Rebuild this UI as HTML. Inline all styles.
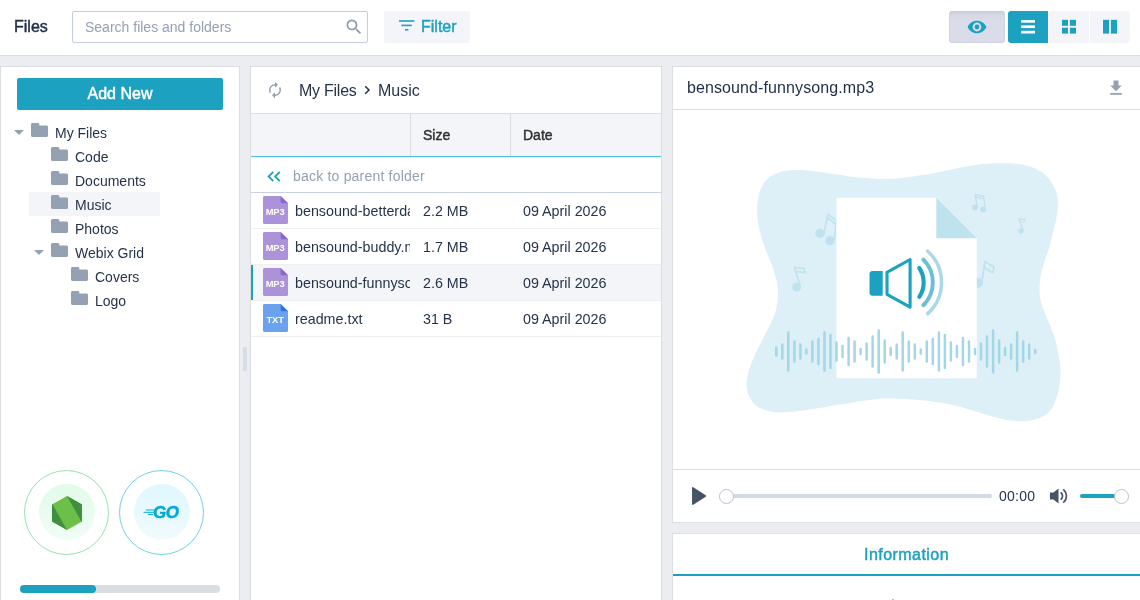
<!DOCTYPE html>
<html><head><meta charset="utf-8"><title>Files</title>
<style>
*{box-sizing:border-box;margin:0;padding:0}
html,body{width:1140px;height:600px;overflow:hidden;background:#EBEDF0;font-family:"Liberation Sans",sans-serif;color:#25344B;}
.abs{position:absolute}
#wrap{position:absolute;left:0;top:0;width:1140px;height:600px;overflow:hidden;will-change:transform}
#top{position:absolute;left:0;top:0;width:1140px;height:56px;background:#fff;border-bottom:1px solid #DADEE0}
.med{-webkit-text-stroke:0.45px currentColor}
#title{position:absolute;left:14px;top:17px;font-size:16px;line-height:20px;color:#1F2E47}
#search{position:absolute;left:72px;top:11px;width:296px;height:32px;border:1px solid #C3CDE0;border-radius:2px;background:#fff}
#search span{position:absolute;left:12px;top:6px;font-size:14px;line-height:18px;color:#94A1B3}
#filter{position:absolute;left:384px;top:11px;width:86px;height:32px;border-radius:2px;background:#F4F5F9;color:#1CA1C1}
#filter span{position:absolute;left:37px;top:6px;font-size:16px;line-height:20px}
.tb{position:absolute;top:11px;height:32px;background:#F4F5F9}
.panel{position:absolute;background:#fff;border:1px solid #DADEE0}
#left{left:0;top:66px;width:240px;height:540px}
#mid{left:250px;top:66px;width:412px;height:540px}
#right{left:672px;top:66px;width:480px;height:457px}
#info{left:672px;top:533px;width:480px;height:80px}
#addnew{position:absolute;left:16px;top:11px;width:206px;height:32px;background:#1CA1C1;border-radius:2px;color:#fff;text-align:center;font-size:16px;line-height:32px}
.trow{position:absolute;left:0;height:24px;font-size:14px;line-height:24px;color:#25344B;white-space:nowrap}
.fold{position:absolute;top:3px;width:17px;height:14px}
.car{position:absolute;top:10px;width:0;height:0;border-left:5px solid transparent;border-right:5px solid transparent;border-top:5px solid #94A1B3}

.tt{font-size:14px}
.p16{font-size:16px;line-height:20px;color:#25344B;white-space:nowrap}
.hd{font-size:14px;line-height:20px;color:#313131}
.frow{width:410px;height:36px;border-bottom:1px solid #EDEFF0}
.fn{font-size:14.3px;line-height:37px;height:35px;color:#25344B;white-space:nowrap;overflow:hidden}
</style></head><body>
<div id="wrap">
<div id="top">
  <div id="title" class="med">Files</div>
  <div id="search"><span>Search files and folders</span>
    <svg class="abs" style="left:271.300px;top:4.500px" width="20" height="20" viewBox="0 0 24 24"><path fill="#8C99AD" d="M9.5,3A6.5,6.5 0 0,1 16,9.500C16,11.110 15.410,12.590 14.440,13.730L14.710,14H15.500L20.500,19L19,20.500L14,15.500V14.710L13.730,14.440C12.590,15.410 11.110,16 9.500,16A6.500,6.500 0 0,1 3,9.500A6.500,6.500 0 0,1 9.500,3M9.500,5C7,5 5,7 5,9.500C5,12 7,14 9.500,14C12,14 14,12 14,9.500C14,7 12,5 9.500,5Z"/></svg>
  </div>
  <div id="filter"><svg class="abs" style="left:15px;top:9px" width="16" height="12" viewBox="0 0 16 12"><rect x="0" y="0.2" width="15.4" height="1.6" fill="#1CA1C1"/><rect x="2.4" y="4.6" width="10.4" height="1.6" fill="#1CA1C1"/><rect x="6" y="9" width="3.4" height="1.6" fill="#1CA1C1"/></svg><span class="med">Filter</span></div>
  <div class="tb" style="left:949px;width:56px;background:linear-gradient(#CED1DF 0,#D6D8E6 12%,#DADCEA 30%);border:1px solid #CFD2E1;border-top-color:#C6C9D8;border-radius:3px">
    <svg class="abs" style="left:17px;top:8.400px" width="20" height="14" viewBox="0 0 20 14"><path fill="#1CA1C1" d="M10,0.700C5.700,0.700 2.100,3.300 0.600,7C2.100,10.700 5.700,13.300 10,13.300C14.300,13.300 17.900,10.700 19.400,7C17.900,3.300 14.300,0.700 10,0.700ZM10,11.400A4.400,4.400 0 1,1 10,2.600A4.400,4.400 0 0,1 10,11.400ZM10,4.600A2.400,2.400 0 1,0 10,9.400A2.400,2.400 0 0,0 10,4.600Z"/></svg>
  </div>
  <div class="tb" style="left:1008px;width:40px;background:#1CA1C1;border-radius:3px 0 0 3px">
    <svg class="abs" style="left:12px;top:8px" width="16" height="16" viewBox="0 0 16 16"><rect x="1.200" y="1.100" width="13.800" height="2.600" fill="#fff"/><rect x="1.200" y="6.400" width="13.800" height="2.700" fill="#fff"/><rect x="1.200" y="11.800" width="13.800" height="2.700" fill="#fff"/></svg>
  </div>
  <div class="tb" style="left:1049px;width:40px">
    <svg class="abs" style="left:13px;top:8px" width="16" height="16" viewBox="0 0 16 16"><g fill="#1CA1C1"><rect x="0" y="0.800" width="6" height="6"/><rect x="7.900" y="0.800" width="6.100" height="6"/><rect x="0" y="8.700" width="6" height="5.900"/><rect x="7.900" y="8.700" width="6.100" height="5.900"/></g></svg>
  </div>
  <div class="tb" style="left:1090px;width:40px;border-radius:0 3px 3px 0">
    <svg class="abs" style="left:13px;top:8px" width="16" height="16" viewBox="0 0 16 16"><g fill="#1CA1C1"><rect x="0" y="0.800" width="6.100" height="13.800"/><rect x="7.900" y="0.800" width="6.100" height="13.800"/></g></svg>
  </div>
</div>

<div id="left" class="panel">
  <div id="addnew" class="med">Add New</div>
  <div id="tree">
<div class="trow" style="top:53px;width:238px"><div class="car" style="left:13px"></div><svg class="fold" style="left:30px" viewBox="0 0 17 14"><path fill="#94A1B3" d="M1.500,0H6.800C7.600,0 8.300,0.700 8.300,1.500V2.500H15.500C16.300,2.500 17,3.200 17,4V12.500C17,13.300 16.300,14 15.500,14H1.500C0.700,14 0,13.300 0,12.500V1.500C0,0.700 0.700,0 1.500,0Z"/></svg><span class="abs tt" style="left:54px;top:1px">My Files</span></div>
<div class="trow" style="top:77px;width:238px"><svg class="fold" style="left:50px" viewBox="0 0 17 14"><path fill="#94A1B3" d="M1.500,0H6.800C7.600,0 8.300,0.700 8.300,1.500V2.500H15.500C16.300,2.500 17,3.200 17,4V12.500C17,13.300 16.300,14 15.500,14H1.500C0.700,14 0,13.300 0,12.500V1.500C0,0.700 0.700,0 1.500,0Z"/></svg><span class="abs tt" style="left:74px;top:1px">Code</span></div>
<div class="trow" style="top:101px;width:238px"><svg class="fold" style="left:50px" viewBox="0 0 17 14"><path fill="#94A1B3" d="M1.500,0H6.800C7.600,0 8.300,0.700 8.300,1.500V2.500H15.500C16.300,2.500 17,3.200 17,4V12.500C17,13.300 16.300,14 15.500,14H1.500C0.700,14 0,13.300 0,12.500V1.500C0,0.700 0.700,0 1.500,0Z"/></svg><span class="abs tt" style="left:74px;top:1px">Documents</span></div>
<div class="trow" style="top:125px;width:238px"><div class="abs" style="left:28px;top:0;width:131px;height:24px;background:#F4F5F9"></div><svg class="fold" style="left:50px" viewBox="0 0 17 14"><path fill="#94A1B3" d="M1.500,0H6.800C7.600,0 8.300,0.700 8.300,1.500V2.500H15.500C16.300,2.500 17,3.200 17,4V12.500C17,13.300 16.300,14 15.500,14H1.500C0.700,14 0,13.300 0,12.500V1.500C0,0.700 0.700,0 1.500,0Z"/></svg><span class="abs tt" style="left:74px;top:1px">Music</span></div>
<div class="trow" style="top:149px;width:238px"><svg class="fold" style="left:50px" viewBox="0 0 17 14"><path fill="#94A1B3" d="M1.500,0H6.800C7.600,0 8.300,0.700 8.300,1.500V2.500H15.500C16.300,2.500 17,3.200 17,4V12.500C17,13.300 16.300,14 15.500,14H1.500C0.700,14 0,13.300 0,12.500V1.500C0,0.700 0.700,0 1.500,0Z"/></svg><span class="abs tt" style="left:74px;top:1px">Photos</span></div>
<div class="trow" style="top:173px;width:238px"><div class="car" style="left:33px"></div><svg class="fold" style="left:50px" viewBox="0 0 17 14"><path fill="#94A1B3" d="M1.500,0H6.800C7.600,0 8.300,0.700 8.300,1.500V2.500H15.500C16.300,2.500 17,3.200 17,4V12.500C17,13.300 16.300,14 15.500,14H1.500C0.700,14 0,13.300 0,12.500V1.500C0,0.700 0.700,0 1.500,0Z"/></svg><span class="abs tt" style="left:74px;top:1px">Webix Grid</span></div>
<div class="trow" style="top:197px;width:238px"><svg class="fold" style="left:70px" viewBox="0 0 17 14"><path fill="#94A1B3" d="M1.500,0H6.800C7.600,0 8.300,0.700 8.300,1.500V2.500H15.500C16.300,2.500 17,3.200 17,4V12.500C17,13.300 16.300,14 15.500,14H1.500C0.700,14 0,13.300 0,12.500V1.500C0,0.700 0.700,0 1.500,0Z"/></svg><span class="abs tt" style="left:94px;top:1px">Covers</span></div>
<div class="trow" style="top:221px;width:238px"><svg class="fold" style="left:70px" viewBox="0 0 17 14"><path fill="#94A1B3" d="M1.500,0H6.800C7.600,0 8.300,0.700 8.300,1.500V2.500H15.500C16.300,2.500 17,3.200 17,4V12.500C17,13.300 16.300,14 15.500,14H1.500C0.700,14 0,13.300 0,12.500V1.500C0,0.700 0.700,0 1.500,0Z"/></svg><span class="abs tt" style="left:94px;top:1px">Logo</span></div>
<div class="abs" style="left:23px;top:403px;width:85px;height:85px;border:1px solid #93E3AE;border-radius:50%"></div>
<div class="abs" style="left:38px;top:417px;width:56px;height:56px;border-radius:50%;background:linear-gradient(#E1FBE9,#F1FDF5)"></div>
<svg class="abs" style="left:50px;top:428px" width="32" height="36" viewBox="0 0 32 36"><path fill="#6CC04A" d="M16,1L31,9.500V26.500L16,35L1,26.500V9.500Z"/><path fill="#3F8F3F" d="M1.500,9.200L16,35L1,26.500V9.500Z"/><path fill="#3F8F3F" d="M16,1L31,9.500V26.500L30.500,26.800Z"/></svg>
<div class="abs" style="left:118px;top:403px;width:85px;height:85px;border:1px solid #72CFEA;border-radius:50%"></div>
<div class="abs" style="left:133px;top:417px;width:56px;height:56px;border-radius:50%;background:linear-gradient(#DFF7FD,#F1FBFE)"></div>
<div class="abs" style="left:152px;top:436px;font-size:17px;line-height:20px;font-weight:bold;font-style:italic;color:#00ACD7;letter-spacing:-0.5px;-webkit-text-stroke:0.5px #00ACD7">GO</div>
<svg class="abs" style="left:142px;top:442px" width="12" height="8" viewBox="0 0 12 8"><g fill="#00ACD7"><rect x="3" y="0.500" width="8" height="1"/><rect x="0.500" y="2.800" width="10" height="1"/><rect x="5" y="5.100" width="5" height="1"/></g></svg>
<div class="abs" style="left:19px;top:518px;width:200px;height:8px;border-radius:4px;background:#DADEE0"><div style="width:76px;height:8px;border-radius:4px;background:#1CA1C1"></div></div>
</div>
</div>
<div class="abs" style="left:243px;top:347px;width:4px;height:24px;background:#D6DCE8"></div>
<div id="mid" class="panel">
<div class="abs" style="left:0;top:0;width:410px;height:47px;border-bottom:1px solid #DADEE0">
  <svg class="abs" style="left:15px;top:14px" width="18" height="18" viewBox="0 0 24 24"><path fill="#94A1B3" d="M12,6V9L16,5L12,1V4A8,8 0 0,0 4,12C4,13.570 4.460,15.030 5.240,16.260L6.700,14.800C6.250,13.970 6,13 6,12A6,6 0 0,1 12,6M18.760,7.740L17.300,9.200C17.740,10.040 18,11 18,12A6,6 0 0,1 12,18V15L8,19L12,23V20A8,8 0 0,0 20,12C20,10.430 19.540,8.970 18.760,7.740Z"/></svg>
  <span class="abs p16" id="pmf" style="left:48px;top:14px;letter-spacing:-0.25px">My Files</span>
  <svg class="abs" style="left:113px;top:18.100px" width="7" height="10" viewBox="0 0 7 10"><path d="M1.200,1.200L5,5L1.200,8.800" fill="none" stroke="#25344B" stroke-width="1.500"/></svg>
  <span class="abs p16" id="pmu" style="left:127px;top:14px">Music</span>
</div>
<div class="abs" style="left:0;top:47px;width:410px;height:43px;background:#F4F5F9;border-bottom:1px solid #4BBFDA">
  <div class="abs" style="left:159px;top:0;width:1px;height:42px;background:#DADEE0"></div>
  <div class="abs" style="left:259px;top:0;width:1px;height:42px;background:#DADEE0"></div>
  <span class="abs hd med" style="left:172px;top:11px">Size</span>
  <span class="abs hd med" style="left:272px;top:11px">Date</span>
</div>
<div class="abs" style="left:0;top:90px;width:410px;height:36px;border-bottom:1px solid #C9D2E4">
  <svg class="abs" style="left:16px;top:13.500px" width="15" height="11" viewBox="0 0 15 11"><path d="M6.300,0.800L1.600,5.500L6.300,10.200M12.800,0.800L8.100,5.500L12.800,10.200" fill="none" stroke="#1CA1C1" stroke-width="1.800"/></svg>
  <span class="abs" id="back" style="left:42px;top:10px;font-size:14px;letter-spacing:0.2px;line-height:18px;color:#94A1B3;white-space:nowrap">back to parent folder</span>
</div>
<div class="abs frow" style="left:0;top:126px;"><svg class="abs" style="left:12px;top:3px" width="25" height="28" viewBox="0 0 25 28"><path fill="#AB92D9" d="M1.500,0H17.700L25,7.300V26.500C25,27.300 24.300,28 23.500,28H1.500C0.700,28 0,27.300 0,26.500V1.500C0,0.700 0.700,0 1.500,0Z"/><path fill="#8866CC" d="M17.700,0L25,7.300H19.200C18.400,7.300 17.700,6.600 17.700,5.800Z"/><text x="12.200" y="19" text-anchor="middle" font-family="Liberation Sans, sans-serif" font-weight="bold" font-size="9.300" fill="#fff">MP3</text></svg><div class="abs fn" style="left:44px;top:0;width:115px">bensound-betterdays.mp3</div><div class="abs fn" style="left:172px;top:0;width:80px">2.2 MB</div><div class="abs fn" style="left:272px;top:0;width:130px">09 April 2026</div></div>
<div class="abs frow" style="left:0;top:162px;"><svg class="abs" style="left:12px;top:3px" width="25" height="28" viewBox="0 0 25 28"><path fill="#AB92D9" d="M1.500,0H17.700L25,7.300V26.500C25,27.300 24.300,28 23.500,28H1.500C0.700,28 0,27.300 0,26.500V1.500C0,0.700 0.700,0 1.500,0Z"/><path fill="#8866CC" d="M17.700,0L25,7.300H19.200C18.400,7.300 17.700,6.600 17.700,5.800Z"/><text x="12.200" y="19" text-anchor="middle" font-family="Liberation Sans, sans-serif" font-weight="bold" font-size="9.300" fill="#fff">MP3</text></svg><div class="abs fn" style="left:44px;top:0;width:115px">bensound-buddy.mp3</div><div class="abs fn" style="left:172px;top:0;width:80px">1.7 MB</div><div class="abs fn" style="left:272px;top:0;width:130px">09 April 2026</div></div>
<div class="abs frow" style="left:0;top:198px;background:#F4F5F9;"><div class="abs" style="left:0;top:0;width:2px;height:35px;background:#1CA1C1"></div><svg class="abs" style="left:12px;top:3px" width="25" height="28" viewBox="0 0 25 28"><path fill="#AB92D9" d="M1.500,0H17.700L25,7.300V26.500C25,27.300 24.300,28 23.500,28H1.500C0.700,28 0,27.300 0,26.500V1.500C0,0.700 0.700,0 1.500,0Z"/><path fill="#8866CC" d="M17.700,0L25,7.300H19.200C18.400,7.300 17.700,6.600 17.700,5.800Z"/><text x="12.200" y="19" text-anchor="middle" font-family="Liberation Sans, sans-serif" font-weight="bold" font-size="9.300" fill="#fff">MP3</text></svg><div class="abs fn" style="left:44px;top:0;width:115px">bensound-funnysong.mp3</div><div class="abs fn" style="left:172px;top:0;width:80px">2.6 MB</div><div class="abs fn" style="left:272px;top:0;width:130px">09 April 2026</div></div>
<div class="abs frow" style="left:0;top:234px;"><svg class="abs" style="left:12px;top:3px" width="25" height="28" viewBox="0 0 25 28"><path fill="#6CA1EE" d="M1.500,0H17.700L25,7.300V26.500C25,27.300 24.300,28 23.500,28H1.500C0.700,28 0,27.300 0,26.500V1.500C0,0.700 0.700,0 1.500,0Z"/><path fill="#2D74E0" d="M17.700,0L25,7.300H19.200C18.400,7.300 17.700,6.600 17.700,5.800Z"/><text x="12.200" y="19" text-anchor="middle" font-family="Liberation Sans, sans-serif" font-weight="bold" font-size="9.300" fill="#fff">TXT</text></svg><div class="abs fn" style="left:44px;top:0;width:115px">readme.txt</div><div class="abs fn" style="left:172px;top:0;width:80px">31 B</div><div class="abs fn" style="left:272px;top:0;width:130px">09 April 2026</div></div>
</div>
<div id="right" class="panel">
<div class="abs" style="left:0;top:0;width:480px;height:43px;border-bottom:1px solid #DADEE0">
  <span class="abs p16" id="rtitle" style="left:14px;top:11px;letter-spacing:0.1px;color:#1F2E47">bensound-funnysong.mp3</span>
  <svg class="abs" style="left:433px;top:10.500px" width="20" height="20" viewBox="0 0 24 24"><path fill="#94A1B3" d="M5,20H19V18H5M19,9H15V3H9V9H5L12,16L19,9Z"/></svg>
</div>
<svg class="abs" style="left:0;top:43px" width="467" height="359" viewBox="0 0 467 359"><path fill="#DEF0F7" d="M84.2,97.0C84.5,93.1 85.0,88.2 86.0,84.5C87.0,80.8 88.1,77.5 90.0,74.5C91.9,71.5 94.3,68.7 97.2,66.6C100.1,64.5 103.3,63.0 107.5,61.9C111.7,60.8 116.8,60.1 122.5,60.0C128.2,59.9 135.0,60.4 142.0,61.2C149.0,61.9 157.0,63.4 164.5,64.5C172.0,65.6 178.2,66.8 187.0,67.5C195.8,68.2 206.6,69.5 217.5,69.0C228.4,68.5 243.2,66.0 252.3,64.6C261.4,63.2 266.2,62.0 272.0,60.8C277.8,59.7 282.0,58.7 287.0,57.7C292.0,56.7 297.0,55.7 302.0,55.0C307.0,54.3 312.0,53.8 317.0,53.5C322.0,53.2 327.0,53.1 332.0,53.2C337.0,53.3 342.5,53.6 347.0,54.2C351.5,54.9 355.2,55.9 359.0,57.2C362.8,58.6 366.5,60.4 369.5,62.5C372.5,64.6 374.9,67.2 377.0,70.0C379.1,72.8 381.0,75.8 382.2,79.0C383.5,82.2 384.4,86.0 384.8,89.5C385.2,93.0 384.8,96.5 384.5,100.0C384.2,103.5 383.6,107.2 383.0,110.5C382.4,113.8 381.9,115.5 380.8,120.0C379.7,124.5 378.0,131.7 376.3,137.5C374.5,143.3 371.9,149.2 370.3,155.0C368.7,160.8 367.3,166.7 366.8,172.5C366.3,178.3 366.3,184.2 367.5,190.0C368.7,195.8 371.6,201.7 373.8,207.5C376.0,213.3 378.9,219.2 380.8,225.0C382.7,230.8 383.9,236.7 385.0,242.5C386.1,248.3 387.3,254.2 387.5,260.0C387.7,265.8 387.0,272.0 386.0,277.5C385.0,283.0 383.7,288.7 381.5,293.2C379.3,297.8 376.8,301.9 372.8,304.8C368.7,307.7 362.5,309.8 357.0,310.8C351.5,311.7 345.3,311.3 339.5,310.8C333.7,310.2 327.8,308.7 322.0,307.2C316.2,305.8 310.3,303.8 304.5,302.0C298.7,300.2 292.8,298.2 287.0,296.8C281.2,295.2 277.3,294.2 269.6,293.0C261.9,291.8 250.4,290.1 240.7,289.4C231.1,288.7 221.5,288.1 211.7,288.6C201.9,289.1 190.6,291.0 182.0,292.2C173.4,293.4 167.2,294.5 160.0,295.7C152.8,296.9 146.0,298.1 139.0,299.2C132.0,300.2 124.4,301.5 118.0,302.0C111.6,302.5 106.0,302.9 100.5,302.0C95.0,301.1 88.8,299.4 84.8,296.8C80.7,294.1 77.9,290.0 76.0,286.2C74.1,282.5 73.5,278.4 73.5,274.0C73.5,269.6 74.4,265.2 76.0,260.0C77.6,254.8 80.4,248.3 83.0,242.5C85.6,236.7 88.8,230.8 91.8,225.0C94.7,219.2 98.3,213.3 100.5,207.5C102.7,201.7 104.1,195.8 104.7,190.0C105.3,184.2 105.0,178.3 104.0,172.5C103.0,166.7 100.8,160.8 98.8,155.0C96.7,149.2 93.8,143.3 91.8,137.5C89.7,131.7 87.7,124.9 86.5,120.0C85.3,115.1 84.9,111.8 84.5,108.0C84.1,104.2 84.0,100.9 84.2,97.0Z"/><circle cx="147.0" cy="123.3" r="4.7" fill="#BFE3EE"/><circle cx="157.0" cy="130.8" r="4.7" fill="#BFE3EE"/><path d="M151.0,123.0 L155.0,104.0 L163.5,111.0 L161.0,130.5" fill="none" stroke="#BFE3EE" stroke-width="1.600" stroke-linejoin="round"/><path d="M154.2,107.5 L163.0,114.5" fill="none" stroke="#BFE3EE" stroke-width="1.600" stroke-linejoin="round"/><circle cx="123.7" cy="177.0" r="4.5" fill="#BFE3EE"/><path d="M127.3,176.0 L121.4,157.3 L131.2,158.5 L132.0,162.8 L122.6,161.4" fill="none" stroke="#BFE3EE" stroke-width="1.600" stroke-linejoin="round"/><circle cx="302.0" cy="97.6" r="3.0" fill="#BFE3EE"/><circle cx="310.0" cy="99.6" r="3.0" fill="#BFE3EE"/><path d="M304.2,97.3 L302.2,84.6 L310.6,86.2 L312.5,99.2" fill="none" stroke="#BFE3EE" stroke-width="1.400" stroke-linejoin="round"/><path d="M302.6,87.0 L311.0,88.6" fill="none" stroke="#BFE3EE" stroke-width="1.400" stroke-linejoin="round"/><circle cx="348.0" cy="121.0" r="2.8" fill="#BFE3EE"/><path d="M350.2,120.3 L345.6,109.2 L352.0,109.3 L351.4,111.8 L346.6,111.6" fill="none" stroke="#BFE3EE" stroke-width="1.200" stroke-linejoin="round"/><circle cx="305.0" cy="173.0" r="5.0" fill="#BFE3EE"/><path d="M308.6,172.5 L312.0,151.5 L321.2,157.2 L319.8,162.8 L311.0,157.5" fill="none" stroke="#BFE3EE" stroke-width="1.700" stroke-linejoin="round"/><path fill="#fff" d="M163.4,87.8 L263.3,87.8 L303.8,128.3 L303.8,268.3 L163.4,268.3 Z"/><path fill="#BEE2EE" d="M263.3,87.8 L303.8,128.3 L263.3,128.3 Z"/><path fill="#1CA1C1" d="M199.5,161.0 H209.7 V185.8 H199.5 a3,3 0 0 1 -3,-3 V164.0 a3,3 0 0 1 3,-3Z"/><path fill="none" stroke="#1CA1C1" stroke-width="3.1" stroke-linejoin="round" d="M214.0,162.3 L237.1,149.5 L237.1,197.1 L214.0,184.3 Z"/><path fill="none" stroke="#1CA1C1" stroke-width="4.1" stroke-linecap="round" d="M246.3,158.0 A25.9,25.9 0 0 1 246.3,186.8"/><path fill="none" stroke="#6BBED5" stroke-width="3.9" stroke-linecap="round" d="M250.4,149.6 A32.4,32.4 0 0 1 250.4,195.2"/><path fill="none" stroke="#A9D9E7" stroke-width="3.5" stroke-linecap="round" d="M254.7,141.2 A42.2,42.2 0 0 1 254.7,203.6"/><path d="M103.3,237.4 V245.4M109.3,234.4 V248.4M115.3,222.4 V260.4M121.4,231.4 V251.4M127.4,234.4 V248.4M133.4,239.4 V243.4M139.4,231.4 V251.4M145.4,228.9 V253.9M151.5,222.4 V260.4M157.5,224.9 V257.9M163.5,232.4 V250.4M169.5,235.9 V246.9M175.6,227.9 V254.9M181.6,231.4 V251.4M187.6,238.9 V243.9M193.6,233.4 V249.4M199.6,226.4 V256.4M205.7,220.4 V262.4M211.7,230.4 V252.4M217.7,237.9 V244.9M223.7,234.4 V248.4M229.7,222.4 V260.4M235.8,231.4 V251.4M241.8,234.4 V248.4M247.8,239.4 V243.4M253.8,231.4 V251.4M259.8,228.9 V253.9M265.9,222.4 V260.4M271.9,224.9 V257.9M277.9,232.4 V250.4M283.9,235.9 V246.9M289.9,227.9 V254.9M296.0,231.4 V251.4M302.0,238.9 V243.9M308.0,233.4 V249.4M314.0,226.4 V256.4M320.1,220.4 V262.4M326.1,230.4 V252.4M332.1,237.9 V244.9M338.1,234.4 V248.4M344.1,222.4 V260.4M350.2,231.4 V251.4M356.2,234.4 V248.4M362.2,239.9 V242.9" fill="none" stroke="#A3D6E6" stroke-width="2.5" stroke-linecap="round"/></svg>
<div class="abs" style="left:0;top:402px;width:480px;height:53px;border-top:1px solid #DADEE0">
  <svg class="abs" style="left:18px;top:16px" width="16" height="20" viewBox="0 0 16 20"><path fill="#475466" stroke="#475466" stroke-width="1.500" stroke-linejoin="round" d="M1.800,1.800L14.300,10L1.800,18.200Z"/></svg>
  <div class="abs" style="left:54px;top:24px;width:265px;height:4px;border-radius:2px;background:#D4DAE3"></div>
  <div class="abs" style="left:46px;top:18.500px;width:15px;height:15px;border-radius:50%;background:#fff;border:1px solid #B9C2CC"></div>
  <span class="abs" id="time" style="left:326px;top:17px;font-size:14px;letter-spacing:0.25px;line-height:18px;color:#25344B">00:00</span>
  <svg class="abs" style="left:374px;top:16px" width="22" height="20" viewBox="0 0 22 20"><path fill="#475466" d="M3,6.500H6.500L11.500,2.500V17.500L6.500,13.500H3Z"/><path fill="none" stroke="#475466" stroke-width="1.700" stroke-linecap="round" d="M14.200,6.800A4.500,4.500 0 0 1 14.200,13.200M16.800,3.800A8.500,8.500 0 0 1 16.800,16.200"/></svg>
  <div class="abs" style="left:407px;top:24px;width:38px;height:4px;border-radius:2px;background:#1CA1C1"></div>
  <div class="abs" style="left:441px;top:18.500px;width:15px;height:15px;border-radius:50%;background:#fff;border:1px solid #B9C2CC"></div>
</div>
</div>
<div id="info" class="panel">
<div class="abs med" id="infot" style="left:0;top:11px;width:467px;text-align:center;font-size:16px;line-height:20px;letter-spacing:0.45px;color:#1CA1C1">Information</div>
<div class="abs" style="left:0;top:40px;width:480px;height:2px;background:#1CA1C1"></div>
<div class="abs" style="left:219px;top:65px;width:2px;height:1px;background:#B8C1CC"></div>
</div>
</div>
</body></html>
